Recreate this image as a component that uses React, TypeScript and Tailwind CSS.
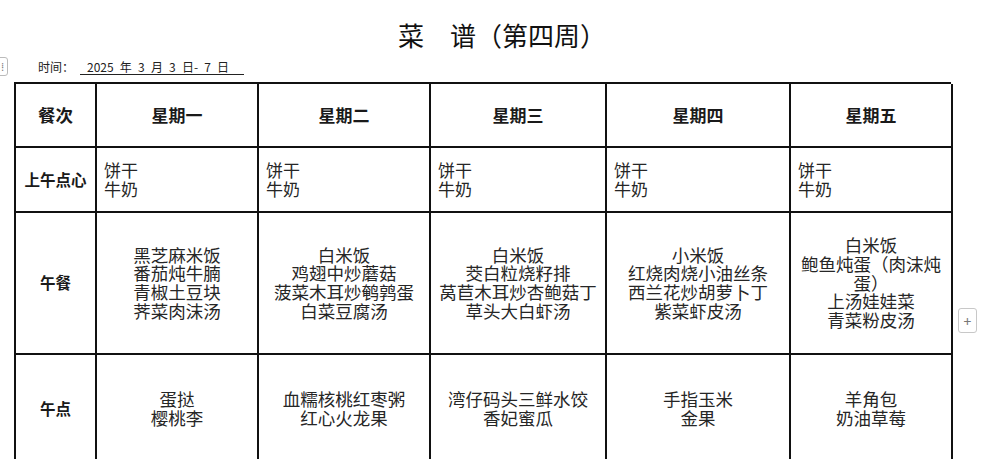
const days = ["星期一", "星期二", "星期三", "星期四", "星期五"];

const lunch = [
    ["黑芝麻米饭", "番茄炖牛腩", "青椒土豆块", "荠菜肉沫汤"],
    ["白米饭", "鸡翅中炒蘑菇", "菠菜木耳炒鹌鹑蛋", "白菜豆腐汤"],
    ["白米饭", "茭白粒烧籽排", "莴苣木耳炒杏鲍菇丁", "草头大白虾汤"],
    ["小米饭", "红烧肉烧小油丝条", "西兰花炒胡萝卜丁", "紫菜虾皮汤"],
    ["白米饭", "鲍鱼炖蛋（肉沫炖蛋）", "上汤娃娃菜", "青菜粉皮汤"],
];

const snack = [
    ["蛋挞", "樱桃李"],
    ["血糯核桃红枣粥", "红心火龙果"],
    ["湾仔码头三鲜水饺", "香妃蜜瓜"],
    ["手指玉米", "金果"],
    ["羊角包", "奶油草莓"],
];

const font = "font-['Noto_Sans_CJK_SC','Noto_Sans',sans-serif]";
const cell = "border-r-2 border-b-2 border-[#111] flex items-center";
const label = `${cell} justify-center text-[15.5px] font-bold text-[#1a1a1a]`;
const dish = `${cell} justify-center text-center px-[6px] text-[17.5px] leading-[18.7px] text-[#262626]`;

export default function App() {
    return (
        <div className={`relative w-[1000px] h-[459px] overflow-hidden bg-white ${font}`}>
            <h1 className="pt-[20px] h-[51px] text-center text-[26px] leading-[30px] font-normal text-[#111] pl-[4px]">
                菜　谱（第四周）
            </h1>

            <div className="mt-[7px] h-[18px] flex items-center pl-[38px] text-[12px] text-[#222]">
                <span>时间：</span>
                <span className="ml-[6px] border-b border-[#222] leading-[14px] pl-[7px] pr-[15px] [word-spacing:3.5px]">2025 年 3 月 3 日- 7 日</span>
            </div>

            {/* side handles */}
            <div className="absolute left-[-11px] top-[57px] w-[19px] h-[19px] rounded-[3px] border border-[#bbb] bg-white flex items-center justify-end pr-[3px] text-[10px] leading-none text-[#777]">
                ⁞
            </div>
            <div className="absolute left-[958px] top-[308px] w-[19px] h-[25px] rounded-[3px] border border-[#c8c8c8] bg-white flex items-center justify-center text-[14px] leading-none text-[#777]">
                +
            </div>

            <div className="ml-[14px] mt-[6px] w-[937px] grid grid-cols-[81px_162px_172px_176px_184px_162px] grid-rows-[64px_65px_142px_110px] border-l-2 border-t-2 border-[#111]">
                <div className={`${cell} justify-center text-[17.5px] font-bold text-[#1a1a1a]`}>餐次</div>
                {days.map((d) => (
                    <div key={d} className={`${cell} justify-center text-[17px] font-bold text-[#1a1a1a]`}>{d}</div>
                ))}

                <div className={label}>上午点心</div>
                {days.map((d) => (
                    <div key={d} className={`${cell} justify-start pl-[7px] text-[17px] leading-[18.5px] text-[#262626]`}>
                        <div>
                            <div>饼干</div>
                            <div>牛奶</div>
                        </div>
                    </div>
                ))}

                <div className={label}>午餐</div>
                {lunch.map((items, i) => (
                    <div key={i} className={dish}>
                        <div>
                            {items.map((t) => <div key={t}>{t}</div>)}
                        </div>
                    </div>
                ))}

                <div className={label}>午点</div>
                {snack.map((items, i) => (
                    <div key={i} className={dish}>
                        <div>
                            {items.map((t) => <div key={t}>{t}</div>)}
                        </div>
                    </div>
                ))}
            </div>
        </div>
    );
}
